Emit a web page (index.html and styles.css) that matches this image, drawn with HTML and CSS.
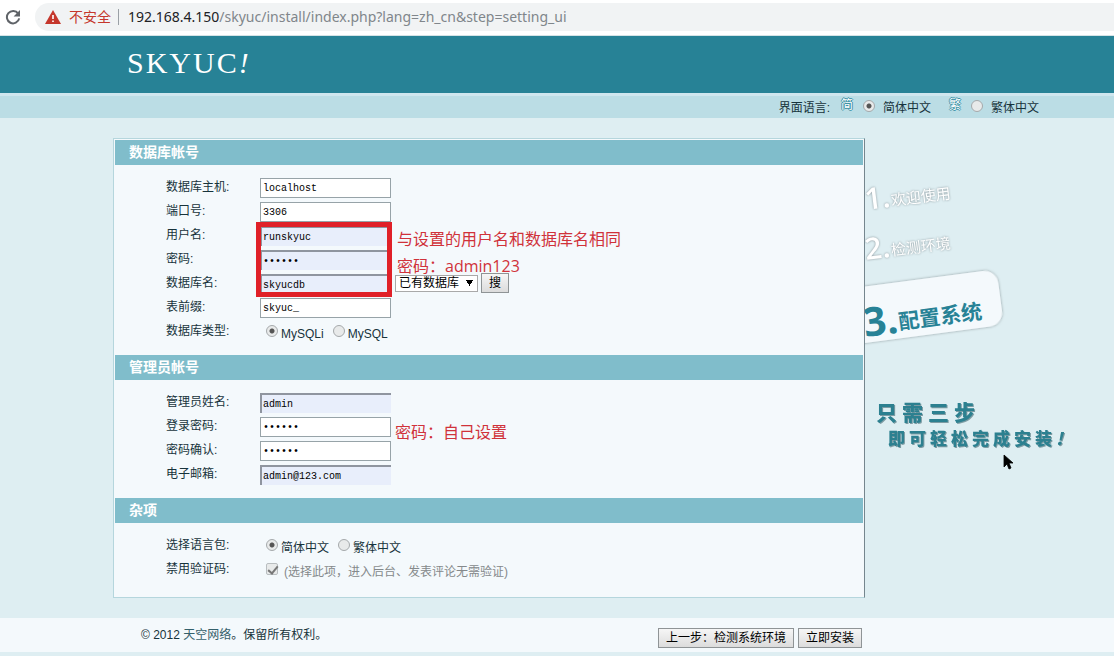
FILE: index.html
```html
<!DOCTYPE html>
<html lang="zh-CN">
<head>
<meta charset="utf-8">
<title>SKYUC! 安装程序</title>
<link rel="stylesheet" href="styles.css">
</head>
<body>
<div class="browser">
  <button class="reload" type="button" aria-label="重新加载">
    <svg width="16" height="16" viewBox="0 0 16 16"><path d="M13.2 4.6A6.2 6.2 0 1 0 14.2 9.4" fill="none" stroke="#5f6368" stroke-width="2"/><path d="M15 1v6.4H8.6z" fill="#5f6368"/></svg>
  </button>
  <div class="address">
    <svg width="16" height="14" viewBox="0 0 16 14"><path d="M8 0l8 14H0z" fill="#c5372c"/><path d="M7.2 5h1.6v4H7.2zM7.2 10.4h1.6V12H7.2z" fill="#fff"/></svg>
    <span class="insecure">不安全</span>
    <span class="url"><b>192.168.4.150</b>/skyuc/install/index.php?lang=zh_cn&amp;step=setting_ui</span>
  </div>
</div>
<header class="header"><div class="logo">SKYUC<i>!</i></div></header>
<div class="langbar">
  <span class="lang-title">界面语言:</span>
  <label class="lang"><span class="glyph" aria-hidden="true">简</span><input type="radio" name="ui" checked><span>简体中文</span></label>
  <label class="lang"><span class="glyph" aria-hidden="true">繁</span><input type="radio" name="ui"><span>繁体中文</span></label>
</div>
<main class="main">
  <form class="panel" id="setup">
    <h2>数据库帐号</h2>
    <div class="rows">
      <div class="row"><label for="host">数据库主机:</label><input class="text" id="host" type="text" value="localhost"></div>
      <div class="row"><label for="port">端口号:</label><input class="text" id="port" type="text" value="3306"></div>
      <div class="row"><label for="user">用户名:</label><input class="text filled" id="user" type="text" value="runskyuc"></div>
      <div class="row"><label for="pass">密码:</label><input class="text filled" id="pass" type="password" value="123456"></div>
      <div class="row"><label for="db">数据库名:</label><input class="text filled" id="db" type="text" value="skyucdb">
        <select class="dblist" aria-label="已有数据库"><option>已有数据库</option></select>
        <button class="btn search" type="button">搜</button></div>
      <div class="row"><label for="prefix">表前缀:</label><input class="text" id="prefix" type="text" value="skyuc_"></div>
      <div class="row" role="radiogroup" aria-labelledby="type"><span class="caption" id="type">数据库类型:</span>
        <label class="choice"><input type="radio" name="type" checked><span>MySQLi</span></label>
        <label class="choice"><input type="radio" name="type"><span>MySQL</span></label></div>
      <div class="mark"></div>
      <p class="note note-user">与设置的用户名和数据库名相同</p>
      <p class="note note-pass">密码：admin123</p>
    </div>
    <h2>管理员帐号</h2>
    <div class="rows">
      <div class="row"><label for="admin">管理员姓名:</label><input class="text filled" id="admin" type="text" value="admin"></div>
      <div class="row"><label for="pw1">登录密码:</label><input class="text" id="pw1" type="password" value="123456"></div>
      <div class="row"><label for="pw2">密码确认:</label><input class="text" id="pw2" type="password" value="123456"></div>
      <div class="row"><label for="mail">电子邮箱:</label><input class="text filled" id="mail" type="text" value="admin@123.com"></div>
      <p class="note note-admin">密码：自己设置</p>
    </div>
    <h2>杂项</h2>
    <div class="rows last">
      <div class="row" role="radiogroup" aria-labelledby="pack"><span class="caption" id="pack">选择语言包:</span>
        <label class="choice"><input type="radio" name="pack" checked><span>简体中文</span></label>
        <label class="choice"><input type="radio" name="pack"><span>繁体中文</span></label></div>
      <div class="row"><span class="caption">禁用验证码:</span>
        <label class="choice off"><input type="checkbox" checked disabled><span>(选择此项，进入后台、发表评论无需验证)</span></label></div>
    </div>
  </form>
  <aside class="steps">
    <svg class="art" width="249" height="340" viewBox="0 0 249 340">
      <defs><filter id="soft" x="-10%" y="-20%" width="120%" height="150%"><feDropShadow dx="0" dy="0" stdDeviation="1.5" flood-color="#6b7478" flood-opacity=".7"/></filter></defs>
      <g class="done">
        <g transform="translate(0 72) rotate(-7)"><text class="num" x="1" y="0">1.</text><text class="name" x="27" y="-1">欢迎使用</text></g>
        <g transform="translate(0 122) rotate(-7)"><text class="num" x="1" y="0">2.</text><text class="name" x="27" y="-1">检测环境</text></g>
      </g>
      <g transform="translate(0 205) rotate(-7.5)">
        <rect x="-30" y="-56" width="170" height="56" rx="14" fill="#f4f9fc" filter="url(#soft)"/>
        <text class="current-num" x="1" y="-6">3.</text><text class="current" x="36" y="-9">配置系统</text>
      </g>
      <g class="slogan"><text class="big" x="11" y="282">只需三步</text><text class="small" x="23" y="307">即可轻松完成安装<tspan class="bang">!</tspan></text></g>
      <path d="M139 317v12l3-3 2 5 2-1-2-5h4z" fill="#000" stroke="#000" stroke-width=".8"/>
    </svg>
  </aside>
</main>
<footer class="footer">
  <div class="footer-inner">
    <p>© 2012 <a href="#">天空网络</a>。保留所有权利。</p>
    <div class="actions"><button class="btn" type="button">上一步：检测系统环境</button><button class="btn" type="submit" form="setup">立即安装</button></div>
  </div>
</footer>
</body>
</html>
```
FILE: styles.css
```css
* { box-sizing: border-box; }
body {
  margin: 0;
  background: #deeef2;
  color: #17333b;
  font: 12px/24px "Liberation Sans", "Noto Sans CJK SC", sans-serif;
}
h2, p { margin: 0; }
button, input, select { font: inherit; margin: 0; }

.browser { display: flex; align-items: center; gap: 14px; height: 36px; padding: 0 0 2px 5px; background: #fff; border-bottom: 1px solid #d5e3e6; }
.reload { display: flex; padding: 0; border: 0; background: none; }
.address { flex: 1; display: flex; align-items: center; height: 28px; padding-left: 10px; border-radius: 14px 0 0 14px; background: #f1f3f4; font: 14px/28px "Noto Sans", "Noto Sans CJK SC", sans-serif; color: #80868b; }
.insecure { margin-left: 8px; padding-right: 7px; border-right: 1px solid #9aa0a6; line-height: 16px; color: #c5372c; }
.url { margin-left: 9px; white-space: nowrap; }
.url b { font-weight: 400; color: #202124; }

.header { display: flex; align-items: center; height: 57px; padding: 0 0 4px 127px; background: #278296; }
.logo { color: #fff; font: 30px/40px "Liberation Serif", serif; letter-spacing: 2px; }

.langbar { display: flex; justify-content: flex-end; height: 25px; padding-right: 75px; border-top: 3px solid #cfe6ee; background: #bbdde5; line-height: 22px; }
.lang { display: flex; align-items: center; }
.lang + .lang { margin-left: 17px; }
.lang > span:last-child { margin-left: 8px; }
.lang-title, .lang > span:last-child { padding-top: 1px; }
.lang-title { margin-right: 10px; }
.lang input { margin-bottom: 2px; }
.glyph { width: 14px; margin-right: 9px; line-height: 18px; align-self: flex-start; text-align: center; color: #fff; text-shadow: 1px 0 #3a91a5, -1px 0 #3a91a5, 0 1px #3a91a5, 0 -1px #3a91a5; }

input[type="radio"], input[type="checkbox"] { appearance: none; flex: none; width: 12px; height: 12px; border: 1px solid #a5a9ab; border-radius: 50%; background: #e8eaea; }
input[type="radio"]:checked { background: radial-gradient(circle, #555 0 2px, #e8eaea 3px); }
input[type="checkbox"] { border-radius: 2px; border-color: #b9bec0; position: relative; }
input[type="checkbox"]:checked::after { content: ""; position: absolute; left: 3px; top: 0; width: 4px; height: 8px; border: solid #777; border-width: 0 2px 2px 0; transform: rotate(40deg); }

.main { display: flex; padding: 20px 0 20px 113px; }
.panel { flex: 0 1 752px; border: 1px solid #b5d6dd; border-right-color: #75868e; background: #f4f9fc; padding: 1px 1px 0 1px; }
h2 { height: 25px; padding-left: 14px; background: #80bdcb; color: #fff; font-size: 14px; line-height: 25px; font-weight: 700; }
.rows { position: relative; padding: 10px 0 12px 51px; }
.rows.last { padding-bottom: 16px; }
.row { display: flex; align-items: center; height: 24px; }
.row > label:first-child, .caption { flex: none; width: 94px; }
.text { width: 131px; height: 20px; margin-top: 2px; padding: 1px 2px 0; border: 1px solid #97a3a8; background: #fff; color: #000; font: 10px/16px "Liberation Mono", monospace; }
.filled { padding: 0 2px 0 1px; border: solid #8f959f; border-width: 2px 0 0 2px; background: #e8eefb; }
.row > .choice { display: flex; align-items: center; margin-left: 6px; }
.choice + .choice { margin-left: 9px; }
.choice span { margin-left: 3px; padding-top: 5px; }
.choice.off { color: #85898b; }
.choice.off span { margin-left: 6px; }
.dblist { appearance: none; width: 83px; height: 17px; margin-left: 4px; padding: 0 0 0 3px; border: 1px solid #a9a9a9; color: #000; line-height: 15px; background: #fff conic-gradient(from -30deg at 50% 100%, #000 60deg, transparent 0) no-repeat 70px 4px / 7px 6px; }
.btn { height: 20px; padding: 0 7px; border: 1px solid #8f9496; background: linear-gradient(#f6f6f6, #dcdcdc); color: #000; line-height: 18px; }
.btn.search { margin-left: 3px; }

.mark { position: absolute; left: 141px; top: 57px; width: 136px; height: 75px; border: 5px solid #e02028; }
.note { position: absolute; color: #d0323a; font: 16px/24px "Open Sans", "Noto Sans CJK SC", sans-serif; white-space: nowrap; }
.note-user { left: 282px; top: 62px; }
.note-pass { left: 282px; top: 89px; }
.note-admin { left: 280px; top: 40px; }

.steps { flex: 1; min-width: 0; overflow: hidden; }
.art { display: block; font-family: "Noto Sans CJK SC", sans-serif; }
.done { fill: #fff; filter: drop-shadow(0 0 1px #889499); }
.num { font-family: "Open Sans", sans-serif; font-size: 30px; font-weight: 600; }
.name { font-size: 15px; }
.current, .current-num { fill: #278296; font-weight: 700; }
.current { font-size: 21px; }
.current-num { font-family: "Open Sans", sans-serif; font-size: 40px; font-weight: 700; }
.slogan { fill: #2c8090; font-weight: 900; filter: drop-shadow(1px 1px 0 #7d9ba3); }
.big { font-size: 21px; letter-spacing: 5px; }
.small { font-size: 17px; letter-spacing: 4px; }
.bang { font-style: italic; }

.footer { border-bottom: 4px solid #deeef2; background: #f4f9fc; }
.footer-inner { display: flex; justify-content: space-between; align-items: center; max-width: 862px; height: 34px; padding-left: 141px; }
.footer a { color: #34606b; text-decoration: none; }
.actions { display: flex; gap: 4px; padding-top: 6px; }
```
